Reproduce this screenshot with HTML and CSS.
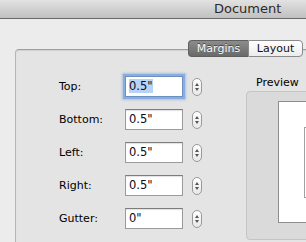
FILE: index.html
```html
<!doctype html>
<html>
	<head>
		<title>Document</title>
		<meta charset="utf-8" />
		<link rel="stylesheet" href="styles.css">
	</head>

	<body>

		<div id="window">

			<div class="titlebar">Document</div>

			<div class="tabs">
				<div class="tab selected">Margins</div>
				<div class="tab">Layout</div>
			</div>

			<div class="group">

				<div class="fields">

					<div class="row">
						<label class="label">Top:</label>
						<div class="input focused"><span class="selection">0.5"</span></div>
						<div class="stepper">
							<svg width="10" height="18" viewBox="0 0 10 18"><path d="M5 5 L7 8 L3 8 Z M3 10 L7 10 L5 13 Z" fill="#555"/></svg>
						</div>
					</div>

					<div class="row">
						<label class="label">Bottom:</label>
						<div class="input">0.5"</div>
						<div class="stepper">
							<svg width="10" height="18" viewBox="0 0 10 18"><path d="M5 5 L7 8 L3 8 Z M3 10 L7 10 L5 13 Z" fill="#555"/></svg>
						</div>
					</div>

					<div class="row">
						<label class="label">Left:</label>
						<div class="input">0.5"</div>
						<div class="stepper">
							<svg width="10" height="18" viewBox="0 0 10 18"><path d="M5 5 L7 8 L3 8 Z M3 10 L7 10 L5 13 Z" fill="#555"/></svg>
						</div>
					</div>

					<div class="row">
						<label class="label">Right:</label>
						<div class="input">0.5"</div>
						<div class="stepper">
							<svg width="10" height="18" viewBox="0 0 10 18"><path d="M5 5 L7 8 L3 8 Z M3 10 L7 10 L5 13 Z" fill="#555"/></svg>
						</div>
					</div>

					<div class="row">
						<label class="label">Gutter:</label>
						<div class="input">0"</div>
						<div class="stepper">
							<svg width="10" height="18" viewBox="0 0 10 18"><path d="M5 5 L7 8 L3 8 Z M3 10 L7 10 L5 13 Z" fill="#555"/></svg>
						</div>
					</div>

				</div>

				<div class="preview">
					<div class="preview_title">Preview</div>
					<div class="preview_box">
						<div class="page">
							<div class="page_margin"></div>
						</div>
					</div>
				</div>

			</div>

		</div>

	</body>
</html>
```

FILE: styles.css
```css
html, body {
	margin: 0;
	padding: 0;
}

body {
	background-color: #ececec;
	font-family: 'DejaVu Sans', 'Liberation Sans', sans-serif;
	font-size: 11px;
	color: #000;
}

#window {
	width: 306px;
	height: 242px;
	overflow: hidden;
}

.titlebar {
	height: 18px;
	line-height: 18px;
	border-bottom: 1px solid #6a6a6a;
	background: linear-gradient(#e2e2e2, #c0c0c0);
	padding-left: 214px;
	font-size: 13px;
	color: #2a2a2a;
	white-space: nowrap;
}

/* segmented control sitting over the group border */
.tabs {
	display: flex;
	justify-content: flex-end;
	padding-right: 3px;
	margin-top: 21px;
	margin-bottom: -8px;
	position: relative;
	z-index: 2;
}

.tab {
	height: 15px;
	line-height: 15px;
	width: 53px;
	text-align: center;
	border: 1px solid #8a8a8a;
	background: linear-gradient(#ffffff, #ececec);
	color: #111;
	border-radius: 0 4px 4px 0;
}

.tab.selected {
	width: 59px;
	border-right: none;
	border-color: #5f5f5f;
	background: linear-gradient(#8c8c8c, #6a6a6a);
	color: #fafafa;
	text-shadow: 0 -1px 0 #444;
	border-radius: 4px 0 0 4px;
}

.group {
	display: flex;
	margin-left: 15px;
	height: 220px;
	width: 320px;
	background-color: #e4e4e4;
	border: 1px solid #b4b4b4;
	border-top-color: #9e9e9e;
	border-radius: 4px;
	box-shadow: inset 0 1px 1px rgba(0, 0, 0, 0.08);
}

.fields {
	display: flex;
	flex-direction: column;
	gap: 12px;
	padding: 26px 0 0 43px;
}

.row {
	display: flex;
	align-items: center;
	height: 21px;
}

.label {
	width: 66px;
}

.input {
	box-sizing: border-box;
	width: 58px;
	height: 21px;
	line-height: 19px;
	padding-left: 3px;
	background-color: #fff;
	border: 1px solid #9b9b9b;
	border-top-color: #7d7d7d;
	box-shadow: inset 0 1px 1px rgba(0, 0, 0, 0.12);
	font-size: 11.5px;
	color: #0a0a20;
}

.input.focused {
	border-color: #6f8fc0;
	box-shadow: 0 0 0 2px #86aee0, 0 0 2px 3px rgba(120, 160, 215, 0.5);
}

.selection {
	background-color: #b6d3f8;
}

.stepper {
	box-sizing: border-box;
	margin-left: 9px;
	width: 10px;
	height: 18px;
	border: 1px solid #9a9a9a;
	border-radius: 5px;
	background: linear-gradient(#ffffff, #e8e8e8);
	display: flex;
	align-items: center;
	justify-content: center;
}

.stepper svg {
	display: block;
	flex-shrink: 0;
}

.preview {
	margin-left: 44px;
	padding-top: 26px;
}

.preview_title {
	padding-left: 10px;
	height: 14px;
	line-height: 14px;
	margin-bottom: 1px;
}

.preview_box {
	box-sizing: border-box;
	width: 90px;
	height: 149px;
	padding: 9px 0 0 31px;
	background-color: #dadada;
	border: 1px solid #c4c4c4;
	border-radius: 4px;
}

.page {
	box-sizing: border-box;
	width: 80px;
	height: 122px;
	padding: 25px 0 0 25px;
	background-color: #fff;
	border: 1px solid #8e8e8e;
}

.page_margin {
	height: 71px;
	width: 60px;
	box-sizing: border-box;
	border: 1px solid #a0a0a0;
}
```
